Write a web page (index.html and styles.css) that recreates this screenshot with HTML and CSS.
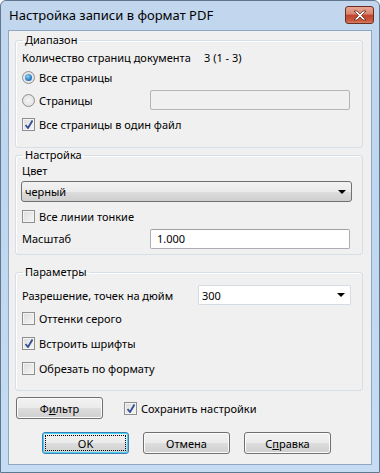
FILE: index.html
```html
<!DOCTYPE html>
<html>
<head>
  <title>Настройка записи в формат PDF</title>
  <meta charset="UTF-8">
  <link rel="stylesheet" href="styles.css">
</head>
<body>
  <div class="window">
    <div class="titlebar">
      <span class="title">Настройка записи в формат PDF</span>
      <span class="close">
        <svg width="14" height="11" viewBox="0 0 14 11"><path d="M1 1 L4 1 L7 4 L10 1 L13 1 L8.5 5.5 L13 10 L10 10 L7 7 L4 10 L1 10 L5.5 5.5 Z" fill="#fff" stroke="#5a2a20" stroke-width="0.8"/></svg>
      </span>
    </div>
    <div class="client">

      <fieldset class="group range">
        <legend>Диапазон</legend>
        <div class="row r-count"><span class="label wide">Количество страниц документа</span><span class="value">3 (1 - 3)</span></div>
        <div class="row r-all"><span class="radio checked"></span>Все страницы</div>
        <div class="row r-pages"><span class="radio"></span><span class="label w111">Страницы</span><span class="edit disabled"></span></div>
        <div class="row r-one"><span class="check checked"></span>Все страницы в один файл</div>
      </fieldset>

      <fieldset class="group setup">
        <legend>Настройка</legend>
        <div class="row r-color">Цвет</div>
        <div class="combo gray">черный<span class="arrow"></span></div>
        <div class="row r-thin"><span class="check"></span>Все линии тонкие</div>
        <div class="row r-scale"><span class="label w128">Масштаб</span><span class="edit">1.000</span></div>
      </fieldset>

      <fieldset class="group params">
        <legend>Параметры</legend>
        <div class="row r-dpi"><span class="label w176">Разрешение, точек на дюйм</span><span class="combo white small">300<span class="arrow"></span></span></div>
        <div class="row r-opt"><span class="check"></span>Оттенки серого</div>
        <div class="row r-opt"><span class="check checked"></span>Встроить шрифты</div>
        <div class="row r-opt"><span class="check"></span>Обрезать по формату</div>
      </fieldset>

      <div class="filter-row">
        <span class="btn filter">Ф<u>и</u>льтр</span>
        <span class="save"><span class="check checked"></span>Сохранить настройки</span>
      </div>

      <div class="buttons">
        <span class="btn default"><span class="focus">OK</span></span>
        <span class="btn">Отмена</span>
        <span class="btn">С<u>п</u>равка</span>
      </div>
    </div>
  </div>
</body>
</html>
```

FILE: styles.css
```css
* {
  box-sizing: border-box;
}

html, body {
  margin: 0;
  padding: 0;
}

body {
  font-family: "Noto Sans", "DejaVu Sans", sans-serif;
  font-size: 11px;
  color: #000;
}

.window {
  width: 380px;
  height: 473px;
  background: linear-gradient(#c2d7ee, #bed6ef 40%, #c6dcf2);
  border: 1px solid #5f7791;
  border-radius: 6px 6px 0 0;
  padding: 0 7px 7px 7px;
  display: flex;
  flex-direction: column;
}

.titlebar {
  height: 29px;
  display: flex;
  align-items: flex-start;
  justify-content: space-between;
  padding-top: 5px;
}

.title {
  font-size: 13px;
  color: #000;
  padding-left: 1px;
}

.close {
  width: 29px;
  height: 18px;
  margin-top: 0;
  margin-right: -2px;
  border: 1px solid #6b2e27;
  border-radius: 3px;
  background: linear-gradient(#e8a493, #d8846f 45%, #c0442a 50%, #c95a41 85%, #d97e5f);
  display: flex;
  align-items: center;
  justify-content: center;
}

.client {
  flex: 1;
  background: #f0f0f0;
  border: 1px solid #8ea7c2;
  padding: 0 8px 0 6px;
}

.group {
  margin: 0;
  border: 1px solid #d5dfe5;
  border-radius: 3px;
  padding: 0 6px;
  box-shadow: inset 1px 1px 0 #fff;
}

.group legend {
  padding: 0 2px;
  margin-left: 1px;
  line-height: 14px;
}

.range {
  margin-top: 2px;
  height: 115px;
}

.setup {
  margin-top: 0;
  height: 107px;
}

.params {
  margin-top: 10px;
  height: 126px;
}

.row {
  display: flex;
  align-items: center;
  white-space: nowrap;
}

.label {
  flex: none;
}

.r-count { height: 20px; }
.r-all { height: 21px; }
.r-pages { height: 24px; }
.r-one { height: 24px; }

.label.wide { width: 182px; }
.w111 { width: 111px; }
.w128 { width: 128px; }
.w176 { width: 176px; }

.radio {
  width: 13px;
  height: 13px;
  border-radius: 50%;
  border: 1px solid #8f8f8f;
  background: radial-gradient(circle at 50% 50%, #f4f4f4, #dcdcdc);
  margin-right: 4px;
  position: relative;
  flex: none;
}

.radio.checked::after {
  content: "";
  position: absolute;
  left: 2px;
  top: 2px;
  width: 7px;
  height: 7px;
  border-radius: 50%;
  background: radial-gradient(circle at 40% 35%, #8fd3f6, #1b6fb6 70%, #124f8a);
}

.check {
  width: 13px;
  height: 13px;
  border: 1px solid #8f8f8f;
  background: linear-gradient(135deg, #dcdcdc, #f6f6f6);
  box-shadow: inset 0 0 0 1px #f4f4f4;
  margin-right: 4px;
  position: relative;
  flex: none;
}

.check.checked::after {
  content: "";
  position: absolute;
  left: 2px;
  top: 1px;
  width: 8px;
  height: 9px;
  background: url("data:image/svg+xml,%3Csvg xmlns='http://www.w3.org/2000/svg' width='8' height='9' viewBox='0 0 8 9'%3E%3Cpath d='M0.5 5 L3 8 L7.5 0.5' fill='none' stroke='%23314e93' stroke-width='1.8'/%3E%3C/svg%3E") no-repeat;
}

.edit {
  width: 200px;
  height: 20px;
  border: 1px solid #abadb3;
  border-radius: 2px;
  background: #fff;
  padding: 0 0 0 6px;
  display: flex;
  align-items: center;
  border-top-color: #a1a1a1;
}

.edit.disabled {
  background: #f0f0f0;
  border-color: #b5b5b5;
}

.r-color { height: 18px; margin-top: -1px; }

.combo {
  height: 21px;
  border: 1px solid #707070;
  border-radius: 3px;
  display: flex;
  align-items: center;
  justify-content: space-between;
  padding: 0 5px 0 3px;
}

.combo.gray {
  margin-top: 2px;
  width: 331px;
  margin-left: -1px;
  background: linear-gradient(#f2f2f2, #ebebeb 50%, #dddddd 51%, #cfcfcf);
}

.combo.white {
  background: #fff;
  border-color: #d6dce4;
  border-radius: 1px;
  width: 153px;
  height: 20px;
}

.arrow {
  width: 0;
  height: 0;
  border-left: 4px solid transparent;
  border-right: 4px solid transparent;
  border-top: 4px solid #000;
}

.r-thin { height: 28px; padding-top: 1px; }
.r-scale { height: 17px; }

.r-dpi { height: 22px; margin-top: 5px; }
.r-opt { height: 25px; }

.filter-row {
  display: flex;
  align-items: center;
  margin-top: 6px;
  height: 22px;
}

.btn {
  width: 87px;
  height: 22px;
  border: 1px solid #707070;
  border-radius: 3px;
  background: linear-gradient(#f2f2f2, #ebebeb 50%, #dddddd 51%, #cfcfcf);
  box-shadow: inset 0 0 0 1px #fbfbfb;
  display: flex;
  align-items: center;
  justify-content: center;
}

.filter {
  margin-left: 1px;
}

.save {
  display: flex;
  align-items: center;
  margin-left: 21px;
}

.buttons {
  display: flex;
  gap: 14px;
  margin-top: 13px;
  padding-left: 27px;
}

.btn.default {
  border-color: #3c7fb1;
  box-shadow: inset 0 0 0 1px #48d0f8;
  padding: 2px;
}

.focus {
  flex: 1;
  align-self: stretch;
  border: 1px dotted #000;
  display: flex;
  align-items: center;
  justify-content: center;
}
```
